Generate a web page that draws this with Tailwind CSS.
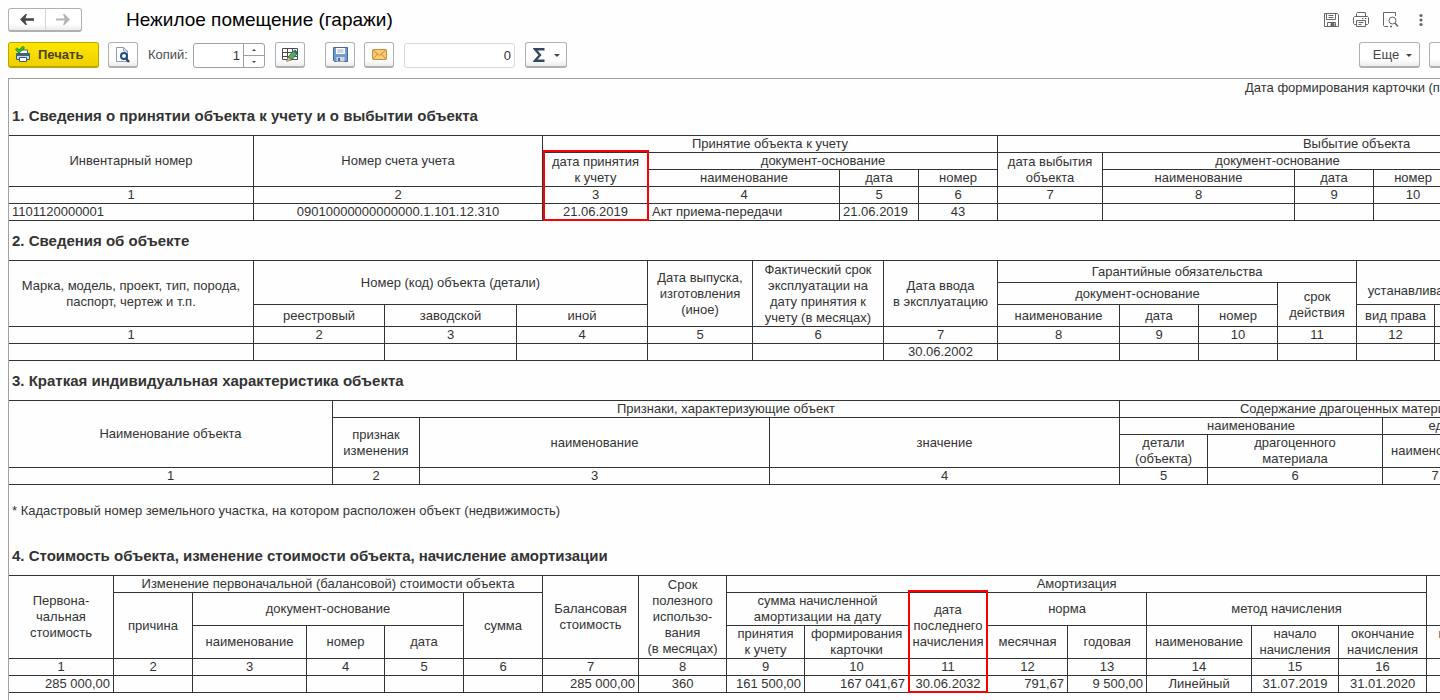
<!DOCTYPE html>
<html lang="ru">
<head>
<meta charset="utf-8">
<title>Нежилое помещение (гаражи)</title>
<script src="https://cdn.jsdelivr.net/npm/@tailwindcss/browser@4"></script>
</head>
<body class="flex h-screen flex-col overflow-hidden bg-[#fefefe] font-['Liberation_Sans',Arial,sans-serif] text-[13px] leading-4 text-[#333]">

<header class="flex h-8 shrink-0 items-end pt-2 pl-2 pr-[11px]">
  <nav class="flex h-6 w-[74px] rounded-[3px] border border-b-2 border-[#b0b0b0] bg-linear-to-b from-white from-70% to-[#ececec]" aria-label="История">
    <button type="button" aria-label="Назад" class="flex flex-1 items-center justify-center border-r border-[#d4d4d4]">
      <svg width="14" height="11" viewBox="0 0 14 11"><path d="M3 5.500H14" fill="none" stroke="#4a4a4a" stroke-width="2.600"/><path d="M0 5.500L5.500 0H7L5 5.500L7 11H5.500Z" fill="#4a4a4a"/></svg>
    </button>
    <button type="button" aria-label="Вперед" class="flex flex-1 items-center justify-center">
      <svg width="14" height="11" viewBox="0 0 14 11"><path d="M0 5.500H11" fill="none" stroke="#b4b4b4" stroke-width="2"/><path d="M14 5.500L8.500 0H7L9 5.500L7 11H8.500Z" fill="#b4b4b4"/></svg>
    </button>
  </nav>
  <h1 class="ml-11 self-center whitespace-nowrap text-[19px] leading-6 text-black">Нежилое помещение (гаражи)</h1>
  <div class="ml-auto flex h-6 items-center gap-[14px] text-[#666]">
    <button type="button" aria-label="Сохранить"><svg width="16" height="16" viewBox="0 0 16 16" fill="none" stroke="currentColor"><path d="M1.500 1.500H14.500L15.500 2.500V14.500H1.500ZM3.500 1.500V7.500H12.500V1.500M5.500 3.500H10.500M5.500 5.500H10.500M4.500 14V10.500H12.500V14"/><path d="M8 11.500H11V14H8Z" fill="currentColor"/></svg></button>
    <button type="button" aria-label="Печать"><svg width="16" height="16" viewBox="0 0 16 16" fill="none" stroke="currentColor"><path d="M3.500 4.500V1.500L4.500 .5H12.500V4.500M3.500 12.500H1.500L.5 11.500V5.500L1.500 4.500H14.500L15.500 5.500V11.500L14.500 12.500H12.500M3.500 8.500H12.500V14.500H3.500ZM5.500 10.500H10.500M5.500 12.500H8.500M9 6.500H10.500M12 6.500H13.500"/></svg></button>
    <button type="button" aria-label="Просмотр"><svg width="16" height="16" viewBox="0 0 16 16" fill="none" stroke="currentColor"><path d="M5 14.500H1.500L.5 13.500V.5H12.500V4"/><circle cx="9.500" cy="8.500" r="3.500"/><path d="M7 14.500H9M12 11L15 14.500" stroke-width="1.500"/></svg></button>
    <button type="button" aria-label="Дополнительно" class="flex w-4 justify-center"><svg width="4" height="14" viewBox="0 0 4 14" fill="currentColor"><circle cx="2" cy="2.500" r="1.600"/><circle cx="2" cy="7" r="1.600"/><circle cx="2" cy="11.500" r="1.600"/></svg></button>
  </div>
</header>

<div class="mt-[10px] flex h-[26px] shrink-0 items-stretch overflow-hidden pl-2" role="toolbar">
  <button type="button" class="flex w-[91px] items-center gap-[7px] rounded-[3px] border border-b-2 border-[#bba500] bg-linear-to-b from-[#ffe600] to-[#efd000] pl-[6px] font-bold text-[#4a4418]">
    <svg width="16" height="17" viewBox="0 0 16 17"><path d="M4 4H12.500V8H4Z" fill="#fff" stroke="#44617d"/><path d="M1.500 7.500H14.500V13.500H1.500Z" fill="#c5d9e9" stroke="#3d5a78"/><path d="M1.500 8H14.500V10H1.500Z" fill="#44617d"/><path d="M4.500 11.500H11.500V15.500H4.500Z" fill="#fff" stroke="#3d5a78"/><path d="M1 2.500L4 5.500L9 .8" fill="none" stroke="#1d8a1d" stroke-width="3"/><path d="M1 2.500L4 5.500L9 .8" fill="none" stroke="#3cc13c" stroke-width="1.500"/></svg>
    Печать
  </button>
  <button type="button" aria-label="Предварительный просмотр" class="ml-[9px] flex w-[30px] items-center justify-center rounded-[3px] border border-b-2 border-[#b0b0b0] bg-linear-to-b from-white from-70% to-[#ececec]">
    <svg width="14" height="16" viewBox="0 0 14 16"><path d="M.5.5H7.500L11.500 4V14.500H.5Z" fill="#fff" stroke="#8a9caf"/><path d="M7.500.5V4H11.500" fill="none" stroke="#8a9caf"/><circle cx="8" cy="9" r="3" fill="#fff" stroke="#1b4f7d" stroke-width="2"/><path d="M10 11.500L13 15" stroke="#1b4f7d" stroke-width="2.400"/></svg>
  </button>
  <label for="copies" class="ml-[10px] w-[45px] self-center text-[#4d4d4d]">Копий:</label>
  <div class="mt-px flex w-[72px] rounded-[3px] border border-[#a0a0a0] bg-white">
    <input id="copies" type="text" value="1" class="w-[49px] min-w-0 pr-[3px] text-right outline-none">
    <div class="flex flex-1 flex-col border-l border-[#a0a0a0]">
      <button type="button" aria-label="Больше" class="flex flex-1 items-center justify-center border-b border-[#a0a0a0]"><svg width="4" height="2" viewBox="0 0 4 2"><path d="M0 2L2 0L4 2Z" fill="#444"/></svg></button>
      <button type="button" aria-label="Меньше" class="flex flex-1 items-center justify-center"><svg width="4" height="2" viewBox="0 0 4 2"><path d="M0 0L2 2L4 0Z" fill="#444"/></svg></button>
    </div>
  </div>
  <button type="button" aria-label="Редактировать" class="ml-[10px] flex w-[30px] items-center justify-center rounded-[3px] border border-b-2 border-[#b0b0b0] bg-linear-to-b from-white from-70% to-[#ececec]">
    <svg width="16" height="15" viewBox="0 0 16 15"><path d="M.5 1.500H15.500V12.500H.5ZM.5 5.500H15.500M.5 9.500H15.500M5.500 1.500V12.500M10.500 1.500V12.500" fill="#fff" stroke="#4a4a4a"/><path d="M6 10L11.500 4L15 7L9.500 13Z" fill="#4faa62" stroke="#2f7a43"/><path d="M11.500 4L13 2.500L16 5.500L15 7Z" fill="#3f5a66"/><path d="M6 10L9.500 13L4.500 14.500Z" fill="#e8b27a" stroke="#8a6540" stroke-width=".6"/></svg>
  </button>
  <button type="button" aria-label="Записать" class="ml-5 flex w-[30px] items-center justify-center rounded-[3px] border border-b-2 border-[#b0b0b0] bg-linear-to-b from-white from-70% to-[#ececec]">
    <svg width="15" height="15" viewBox="0 0 15 15"><path d="M.5.500H14.500V14.500H1.500L.5 13.500Z" fill="#6f9bd1" stroke="#44699a"/><path d="M3 1H12V7H3Z" fill="#fff"/><path d="M4.500 3H10.500M4.500 5H10.500" stroke="#8fa9c8"/><path d="M3.500 10H11.500V14.500H3.500Z" fill="#cfd6dd"/><path d="M5 11H7V14H5Z" fill="#44699a"/></svg>
  </button>
  <button type="button" aria-label="Отправить по почте" class="ml-[9px] flex w-[30px] items-center justify-center rounded-[3px] border border-b-2 border-[#b0b0b0] bg-linear-to-b from-white from-70% to-[#ececec]">
    <svg width="15" height="11" viewBox="0 0 15 11"><rect x=".5" y=".5" width="14" height="10" rx="1" fill="#f8cc78" stroke="#c98b2c"/><path d="M1 1L7.500 6.500L14 1M1 10L5.500 5M14 10L9.500 5" fill="none" stroke="#c98b2c"/></svg>
  </button>
  <input type="text" value="0" readonly aria-label="Сумма выделенных ячеек" class="ml-[10px] mt-px w-[111px] rounded-[3px] border border-[#d9d9d9] bg-white pr-[3px] text-right outline-none">
  <button type="button" aria-label="Сумма" class="ml-[10px] flex w-[42px] items-center justify-center gap-[9px] rounded-[3px] border border-b-2 border-[#b0b0b0] bg-linear-to-b from-white from-70% to-[#ececec]">
    <svg width="12" height="14" viewBox="0 0 12 14"><path d="M11.500 1.200H2L7 7L2 12.800H11.500" fill="none" stroke="#34495e" stroke-width="2.400"/></svg>
    <svg class="mt-px" width="6" height="3" viewBox="0 0 6 3"><path d="M0 0H6L3 3Z" fill="#444"/></svg>
  </button>
  <button type="button" class="ml-auto flex w-[61px] shrink-0 items-center justify-center gap-[7px] rounded-[3px] border border-b-2 border-[#b0b0b0] bg-linear-to-b from-white from-70% to-[#ececec] pl-[6px] text-[#444]">
    Еще
    <svg class="mt-px" width="6" height="3" viewBox="0 0 6 3"><path d="M0 0H6L3 3Z" fill="#444"/></svg>
  </button>
  <button type="button" aria-label="Справка" class="-mr-5 ml-[9px] w-[31px] shrink-0 rounded-[3px] border border-b-2 border-[#b0b0b0] bg-linear-to-b from-white from-70% to-[#ececec]"></button>
</div>

<main class="mt-[10px] ml-2 flex-1 overflow-hidden border-t border-l border-[#a0a0a0] whitespace-nowrap">
  <p class="flex h-[17px] items-end justify-end"><span class="w-[195px]">Дата формирования карточки (по состоянию на)</span></p>

  <h2 class="flex h-[39px] items-center pl-[3px] text-[15px] font-bold">1. Сведения о принятии объекта к учету и о выбытии объекта</h2>
  <table class="w-[1707px] table-fixed border-separate border-spacing-0 border-t border-[#333] text-center [&_td]:h-[17px] [&_td]:border-r [&_td]:border-b [&_td]:border-[#333] [&_td]:px-[3px] [&_td]:py-0 [&_th]:h-[17px] [&_th]:border-r [&_th]:border-b [&_th]:border-[#333] [&_th]:p-0 [&_th]:font-normal">
    <colgroup><col class="w-[245px]"><col class="w-[289px]"><col class="w-[106px]"><col class="w-[191px]"><col class="w-[79px]"><col class="w-[79px]"><col class="w-[105px]"><col class="w-[192px]"><col class="w-[79px]"><col class="w-[79px]"><col class="w-[263px]"></colgroup>
    <thead>
      <tr><th rowspan="3">Инвентарный номер</th><th rowspan="3">Номер счета учета</th><th colspan="4">Принятие объекта к учету</th><th colspan="5">Выбытие объекта</th></tr>
      <tr><th rowspan="2" class="relative">дата принятия<br>к учету<span class="absolute -top-[3px] -right-px left-0 h-[71px] border-2 border-[#ff0000]"></span></th><th colspan="3">документ-основание</th><th rowspan="2">дата выбытия<br>объекта</th><th colspan="3">документ-основание</th><th rowspan="2"></th></tr>
      <tr><th>наименование</th><th>дата</th><th>номер</th><th>наименование</th><th>дата</th><th>номер</th></tr>
      <tr><th>1</th><th>2</th><th>3</th><th>4</th><th>5</th><th>6</th><th>7</th><th>8</th><th>9</th><th>10</th><th>11</th></tr>
    </thead>
    <tbody>
      <tr><td class="text-left">1101120000001</td><td>09010000000000000.1.101.12.310</td><td>21.06.2019</td><td class="text-left">Акт приема-передачи</td><td class="text-left">21.06.2019</td><td>43</td><td></td><td></td><td></td><td></td><td></td></tr>
    </tbody>
  </table>

  <h2 class="flex h-[39px] items-center pl-[3px] text-[15px] font-bold">2. Сведения об объекте</h2>
  <table class="w-[1542px] table-fixed border-separate border-spacing-0 border-t border-[#333] text-center [&_td]:h-[17px] [&_td]:border-r [&_td]:border-b [&_td]:border-[#333] [&_td]:px-[3px] [&_td]:py-0 [&_th]:h-[17px] [&_th]:border-r [&_th]:border-b [&_th]:border-[#333] [&_th]:p-0 [&_th]:font-normal">
    <colgroup><col class="w-[245px]"><col class="w-[131px]"><col class="w-[132px]"><col class="w-[131px]"><col class="w-[105px]"><col class="w-[131px]"><col class="w-[114px]"><col class="w-[122px]"><col class="w-[79px]"><col class="w-[79px]"><col class="w-[79px]"><col class="w-[78px]"><col class="w-[116px]"></colgroup>
    <thead>
      <tr class="h-[22px]"><th rowspan="3">Марка, модель, проект, тип, порода,<br>паспорт, чертеж и т.п.</th><th rowspan="2" colspan="3">Номер (код) объекта (детали)</th><th rowspan="3">Дата выпуска,<br>изготовления<br>(иное)</th><th rowspan="3">Фактический срок<br>эксплуатации на<br>дату принятия к<br>учету (в месяцах)</th><th rowspan="3">Дата ввода<br>в эксплуатацию</th><th colspan="4">Гарантийные обязательства</th><th rowspan="2" colspan="2">&nbsp;<br>устанавливаемые на объект</th></tr>
      <tr class="h-[22px]"><th colspan="3">документ-основание</th><th rowspan="2">срок<br>действия</th></tr>
      <tr class="h-[22px]"><th>реестровый</th><th>заводской</th><th>иной</th><th>наименование</th><th>дата</th><th>номер</th><th>вид права</th><th></th></tr>
      <tr><th>1</th><th>2</th><th>3</th><th>4</th><th>5</th><th>6</th><th>7</th><th>8</th><th>9</th><th>10</th><th>11</th><th>12</th><th>13</th></tr>
    </thead>
    <tbody>
      <tr><td></td><td></td><td></td><td></td><td></td><td></td><td>30.06.2002</td><td></td><td></td><td></td><td></td><td></td><td></td></tr>
    </tbody>
  </table>

  <h2 class="flex h-[39px] items-center pl-[3px] text-[15px] font-bold">3. Краткая индивидуальная характеристика объекта</h2>
  <table class="w-[1586px] table-fixed border-separate border-spacing-0 border-t border-[#333] text-center [&_th]:h-[17px] [&_th]:border-r [&_th]:border-b [&_th]:border-[#333] [&_th]:p-0 [&_th]:font-normal">
    <colgroup><col class="w-[324px]"><col class="w-[87px]"><col class="w-[350px]"><col class="w-[350px]"><col class="w-[88px]"><col class="w-[175px]"><col class="w-[105px]"><col class="w-[107px]"></colgroup>
    <thead>
      <tr><th rowspan="3">Наименование объекта</th><th colspan="3">Признаки, характеризующие объект</th><th colspan="4">Содержание драгоценных материалов</th></tr>
      <tr><th rowspan="2">признак<br>изменения</th><th rowspan="2">наименование</th><th rowspan="2">значение</th><th colspan="2">наименование</th><th colspan="2">единица измерения</th></tr>
      <tr class="h-[33px]"><th>детали<br>(объекта)</th><th>драгоценного<br>материала</th><th>наименование</th><th>код</th></tr>
      <tr><th>1</th><th>2</th><th>3</th><th>4</th><th>5</th><th>6</th><th>7</th><th>8</th></tr>
    </thead>
  </table>

  <p class="flex h-[51px] items-center pl-[3px]">* Кадастровый номер земельного участка, на котором расположен объект (недвижимость)</p>

  <h2 class="flex h-[39px] items-center pl-[3px] text-[15px] font-bold">4. Стоимость объекта, изменение стоимости объекта, начисление амортизации</h2>
  <table class="w-[1498px] table-fixed border-separate border-spacing-0 border-t border-[#333] text-center [&_td]:h-[17px] [&_td]:border-r [&_td]:border-b [&_td]:border-[#333] [&_td]:px-[3px] [&_td]:py-0 [&_th]:h-[17px] [&_th]:border-r [&_th]:border-b [&_th]:border-[#333] [&_th]:p-0 [&_th]:font-normal">
    <colgroup><col class="w-[105px]"><col class="w-[79px]"><col class="w-[114px]"><col class="w-[78px]"><col class="w-[79px]"><col class="w-[79px]"><col class="w-[96px]"><col class="w-[88px]"><col class="w-[78px]"><col class="w-[104px]"><col class="w-[79px]"><col class="w-[80px]"><col class="w-[79px]"><col class="w-[105px]"><col class="w-[87px]"><col class="w-[88px]"><col class="w-[80px]"></colgroup>
    <thead>
      <tr><th rowspan="3">Первона-<br>чальная<br>стоимость</th><th colspan="5">Изменение первоначальной (балансовой) стоимости объекта</th><th rowspan="3">Балансовая<br>стоимость</th><th rowspan="3">Срок<br>полезного<br>использо-<br>вания<br>(в месяцах)</th><th colspan="8">Амортизация</th><th rowspan="2"></th></tr>
      <tr class="h-[33px]"><th rowspan="2">причина</th><th colspan="3">документ-основание</th><th rowspan="2">сумма</th><th colspan="2">сумма начисленной<br>амортизации на дату</th><th rowspan="2" class="relative">дата<br>последнего<br>начисления<span class="absolute -top-[3px] -right-px -left-px h-[103px] border-2 border-[#ff0000]"></span></th><th colspan="2">норма</th><th colspan="3">метод начисления</th></tr>
      <tr class="h-[33px]"><th>наименование</th><th>номер</th><th>дата</th><th>принятия<br>к учету</th><th>формирования<br>карточки</th><th>месячная</th><th>годовая</th><th>наименование</th><th>начало<br>начисления</th><th>окончание<br>начисления</th><th>принятия<br>к учету</th></tr>
      <tr><th>1</th><th>2</th><th>3</th><th>4</th><th>5</th><th>6</th><th>7</th><th>8</th><th>9</th><th>10</th><th>11</th><th>12</th><th>13</th><th>14</th><th>15</th><th>16</th><th>17</th></tr>
    </thead>
    <tbody>
      <tr><td class="text-right">285 000,00</td><td></td><td></td><td></td><td></td><td></td><td class="text-right">285 000,00</td><td>360</td><td class="text-right">161 500,00</td><td class="text-right">167 041,67</td><td>30.06.2032</td><td class="text-right">791,67</td><td class="text-right">9 500,00</td><td>Линейный</td><td>31.07.2019</td><td>31.01.2020</td><td></td></tr>
    </tbody>
  </table>
</main>
</body>
</html>
